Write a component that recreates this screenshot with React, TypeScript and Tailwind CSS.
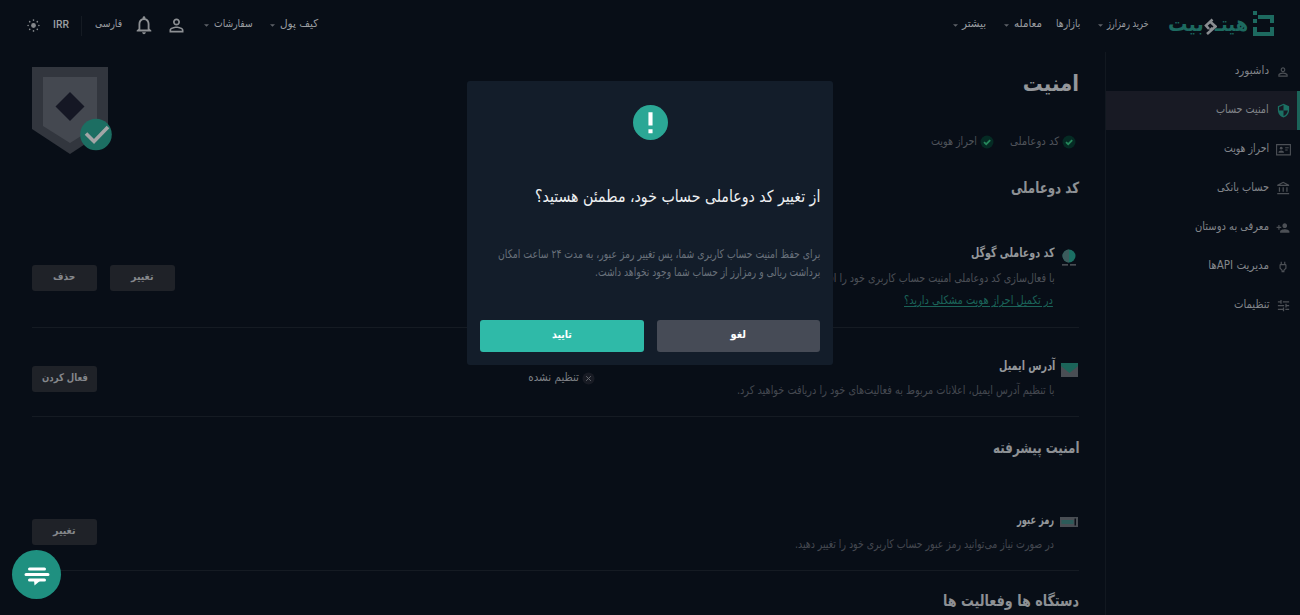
import React, { useLayoutEffect, useRef, useState } from "react";
import {
  MdPersonOutline,
  MdNotificationsNone,
  MdSecurity,
  MdOutlineAccountBalance,
  MdPersonAdd,
  MdOutlinePower,
  MdTune,
} from "react-icons/md";

/** Single line of text, condensed or stretched to an exact width. */
function Fit({ w, className = "", children }: { w: number; className?: string; children: React.ReactNode }) {
  const ref = useRef<HTMLSpanElement>(null);
  const [scale, setScale] = useState(1);
  useLayoutEffect(() => {
    if (ref.current) setScale(w / ref.current.offsetWidth);
  }, [w]);
  return (
    <span className={`block h-5 shrink-0 whitespace-nowrap leading-5 ${className}`} style={{ width: w }}>
      <span ref={ref} className="inline-block origin-right" style={{ transform: `scaleX(${scale})` }}>
        {children}
      </span>
    </span>
  );
}

function Caret({ className = "" }: { className?: string }) {
  return (
    <svg viewBox="0 0 6 3" className={`mt-1 h-[3px] w-[5px] shrink-0 fill-[#5d6167] ${className}`}>
      <path d="M0 0h6L3 3z" />
    </svg>
  );
}

function Logo() {
  return (
    <div className="flex items-center">
      <svg viewBox="0 0 21 25" className="h-[25px] w-[21px] fill-[#1d6a60]">
        <path d="M0 0h4v4H0zM5 4h16v8h-4V8H5zM0 8h4v4H0zM0 16h4v5h13v-5h4v9H0z" />
      </svg>
      <div className="mt-1 mr-[5px] flex items-center font-bold text-[#1d6a60]">
        <Fit w={33} className="h-6 text-[21px]">هیتـ</Fit>
        <svg viewBox="0 0 13 17" className="-mr-0.5 mt-0.5 h-[17px] w-[13px]" fill="none" stroke="#8a8d91" strokeWidth="2.6">
          <path d="M8.500 1.500 2 7.500l3 3.500M6 3.500l5.500 5L3 16M6 12.500l2.500-2.500" />
        </svg>
        <Fit w={36} className="h-6 text-[21px]">بیت</Fit>
      </div>
    </div>
  );
}

function Sun() {
  return (
    <svg viewBox="0 0 14 14" className="mt-1 h-[13px] w-[13px] fill-[#85888c]">
      <circle cx="7" cy="7" r="2.6" />
      <circle cx="7" cy="1.2" r=".9" />
      <circle cx="7" cy="12.8" r=".9" />
      <circle cx="1.2" cy="7" r=".9" />
      <circle cx="12.8" cy="7" r=".9" />
      <circle cx="2.9" cy="2.9" r=".9" />
      <circle cx="11.1" cy="2.9" r=".9" />
      <circle cx="2.9" cy="11.1" r=".9" />
      <circle cx="11.1" cy="11.1" r=".9" />
    </svg>
  );
}

function IdCard() {
  return (
    <svg viewBox="0 0 15 12" className="h-3 w-[15px]" fill="none" stroke="currentColor">
      <path d="M.6.6h13.8v10.3H.6z" strokeWidth="1.1" />
      <circle cx="5.2" cy="4.2" r="1.4" fill="currentColor" stroke="none" />
      <path d="M2.4 8.7c0-3 5.6-3 5.6 0z" fill="currentColor" stroke="none" />
      <path d="M9.2 3.8h3.5M9.2 6h2.5" strokeWidth="1" />
    </svg>
  );
}

const menu = [
  { label: "داشبورد", w: 34, icon: <MdPersonOutline size={14} /> },
  { label: "امنیت حساب", w: 53, icon: <MdSecurity size={15} />, active: true },
  { label: "احراز هویت", w: 45, icon: <IdCard /> },
  { label: "حساب بانکی", w: 52, icon: <MdOutlineAccountBalance size={15} /> },
  { label: "معرفی به دوستان", w: 74, icon: <MdPersonAdd size={14} /> },
  { label: "مدیریت APIها", w: 61, icon: <MdOutlinePower size={14} /> },
  { label: "تنظیمات", w: 36, icon: <MdTune size={15} className="-scale-x-100" /> },
];

function Header() {
  return (
    <header className="flex h-[52px] items-start justify-between pr-[26px] pl-[27px] text-[11px] font-medium text-[#9b9ea2]">
      <nav className="flex h-[47px] items-center">
        <Logo />
        <Fit w={42} className="mr-[19px]">خرید رمزارز</Fit>
        <Caret className="mr-1" />
        <Fit w={24} className="mr-[18px]">بازارها</Fit>
        <Fit w={28} className="mr-3.5">معامله</Fit>
        <Caret className="mr-[5px]" />
        <Fit w={24} className="mr-[18px]">بیشتر</Fit>
        <Caret className="mr-1" />
      </nav>
      <div className="flex h-[47px] items-center">
        <Fit w={38}>کیف پول</Fit>
        <Caret className="mr-[5px]" />
        <Fit w={39} className="mr-[17px]">سفارشات</Fit>
        <Caret className="mr-[5px]" />
        <MdPersonOutline className="mr-[17px] mt-[3px] h-[21px] w-[21px] text-[#8d9094]" />
        <MdNotificationsNone className="mr-[11px] mt-[3px] h-[22px] w-[22px] text-[#8d9094]" />
        <Fit w={27} className="mr-[11px]">فارسی</Fit>
        <span className="mr-[13px] mt-1 h-5 w-px bg-[#151b23]" />
        <span className="mt-0.5 mr-3 w-4 font-['Roboto','Noto_Sans',sans-serif] text-[11px] leading-5">
          <Fit w={16}>IRR</Fit>
        </span>
        <span className="mr-[13px]"><Sun /></span>
      </div>
    </header>
  );
}

function Sidebar() {
  return (
    <aside className="w-[195px] shrink-0 border-l border-[#121820]">
      {menu.map((m) => (
        <div
          key={m.label}
          className={`flex h-[39px] items-center pb-[3px] ${
            m.active ? "border-r-[3px] border-[#1b6459] bg-[#181a24] pr-[6px]" : "pr-[9px]"
          }`}
        >
          <span className={`mt-[3px] flex w-4 justify-center ${m.active ? "text-[#1b7063]" : "text-[#4c5056]"}`}>
            {m.icon}
          </span>
          <Fit w={m.w} className="mr-1.5 text-[11.5px] text-[#82858a]">{m.label}</Fit>
        </div>
      ))}
    </aside>
  );
}

function Verified({ label, w }: { label: string; w: number }) {
  return (
    <div className="flex items-center gap-[3px]">
      <svg viewBox="0 0 14 14" className="mt-0.5 h-[14px] w-[14px]">
        <circle cx="7" cy="7" r="6.5" fill="#052b24" />
        <path d="m4 7.2 2.2 2 4-4" fill="none" stroke="#26875b" strokeWidth="1.8" />
      </svg>
      <Fit w={w} className="text-[11.5px] text-[#4f535a]">{label}</Fit>
    </div>
  );
}

function Btn({ label, w }: { label: string; w: number }) {
  return (
    <button className="flex h-[26px] w-[65px] justify-center rounded-[3px] bg-[#1f2228] pt-px text-[10.5px] font-semibold text-[#85888c]">
      <Fit w={w}>{label}</Fit>
    </button>
  );
}

function Badge() {
  return (
    <svg viewBox="0 0 80 88" className="h-[88px] w-20">
      <path d="M0 0h76v62L38 87 0 62z" fill="#32363e" />
      <path d="M11 10h54v49L38 76 11 59z" fill="#444850" />
      <path d="m38 25 14.5 14.5L38 54 23.500 39.500z" fill="#151724" />
      <circle cx="64" cy="67.500" r="15.800" fill="#1c6e62" />
      <path d="m54 66.500 8 8 14-14.500" fill="none" stroke="#a3a5a6" strokeWidth="3.600" />
    </svg>
  );
}

function Main() {
  return (
    <main className="w-[1105px] pr-[26px] pl-8">
      <div className="flex h-[116px] justify-between">
        <div className="pt-[22px]">
          <Fit w={56} className="h-7 text-[22px] font-bold text-[#94979b]">امنیت</Fit>
          <div className="mt-[29px] flex gap-4 pr-[3px]">
            <Verified label="کد دوعاملی" w={49} />
            <Verified label="احراز هویت" w={46} />
          </div>
        </div>
        <div className="pt-[15px]">
          <div className="w-20"><Badge /></div>
        </div>
      </div>

      <section className="flex h-40 flex-col justify-between border-b border-[#151b23]">
        <Fit w={68} className="mt-[10px] text-[15.5px] font-bold text-[#8d9094]">کد دوعاملی</Fit>
        <div className="flex items-start justify-between pb-[17px]">
          <div className="flex">
            <svg viewBox="0 0 14 18" className="mt-[6px] mr-[3px] ml-[7px] h-[18px] w-[14px]">
              <circle cx="7" cy="7" r="6.500" fill="#1b6f63" />
              <path d="M7 7V13.500A6.500 6.500 0 0 1 .5 7 6.500 6.500 0 0 1 7 .5z" fill="#3c5b5c" />
              <path d="M0 15.800h6M8 15.800h6" stroke="#5d6167" strokeWidth="1.200" />
            </svg>
            <div>
              <Fit w={84} className="text-[13px] font-bold text-[#94979b]">کد دوعاملی گوگل</Fit>
              <Fit w={272} className="mt-[5px] text-[12px] text-[#4b4f56]">
                با فعال‌سازی کد دوعاملی امنیت حساب کاربری خود را افزایش دهید.
              </Fit>
              <Fit w={149} className="mt-0.5 mr-0.5 text-[12px] text-[#1b6459] [&>span]:underline [&>span]:underline-offset-2">
                در تکمیل احراز هویت مشکلی دارید؟
              </Fit>
            </div>
          </div>
          <div className="mt-[22px] flex gap-[13px]">
            <Btn label="تغییر" w={22} />
            <Btn label="حذف" w={22} />
          </div>
        </div>
      </section>

      <section className="flex h-[89px] justify-between border-b border-[#151b23] pt-7">
        <div className="flex">
          <svg viewBox="0 0 17 14" className="mt-[7px] mr-[1px] ml-[6px] h-[14px] w-[17px]">
            <path d="M0 0h17v14H0z" fill="#494e54" />
            <path d="M0 0h17v3L8.500 10 0 3z" fill="#1b6459" />
          </svg>
          <div>
            <Fit w={56} className="text-[13px] font-bold text-[#94979b]">آدرس ایمیل</Fit>
            <Fit w={318} className="mt-1 text-[12px] text-[#444850]">
              با تنظیم آدرس ایمیل، اعلانات مربوط به فعالیت‌های خود را دریافت خواهید کرد.
            </Fit>
          </div>
          <div className="mt-[11px] mr-[142px] flex h-5 items-center gap-[3px]">
            <svg viewBox="0 0 14 14" className="mt-[3px] h-[13px] w-[13px]">
              <circle cx="7" cy="7" r="6.500" fill="#181b24" />
              <path d="m4.500 4.500 5 5m0-5-5 5" stroke="#6c6f75" strokeWidth="1" />
            </svg>
            <Fit w={51} className="text-[11.5px] text-[#7d8085]">تنظیم نشده</Fit>
          </div>
        </div>
        <div className="mt-[10px]">
          <Btn label="فعال کردن" w={46} />
        </div>
      </section>

      <section className="flex h-[154px] flex-col justify-between border-b border-[#151b23] pt-[21px]">
        <Fit w={86} className="text-[15.5px] font-bold text-[#8d9094]">امنیت پیشرفته</Fit>
        <div className="flex justify-between pb-4">
          <div className="flex">
            <svg viewBox="0 0 18 10" className="mt-[7px] mr-px ml-[6px] h-[10px] w-[18px]">
              <path d="M0 0h18v10H0z" fill="#494e54" />
              <path d="M1.500 3h12v4h-12z" fill="#2c5b59" />
              <path d="M14.500 1.500h1.500v7h-1.500z" fill="#0a1018" />
            </svg>
            <div>
              <Fit w={37} className="text-[13px] font-bold text-[#94979b]">رمز عبور</Fit>
              <Fit w={259} className="mt-1 text-[12px] text-[#444850]">
                در صورت نیاز می‌توانید رمز عبور حساب کاربری خود را تغییر دهید.
              </Fit>
            </div>
          </div>
          <div className="mt-[9px]">
            <Btn label="تغییر" w={22} />
          </div>
        </div>
      </section>
      <Fit w={136} className="mt-5 text-[15.5px] font-bold text-[#8d9094]">دستگاه ها وفعالیت ها</Fit>
    </main>
  );
}

function Dialog() {
  return (
    <div role="dialog" className="absolute top-[81px] left-[467px] h-[284px] w-[366px] rounded-[3px] bg-[#131d2a] px-[13px] pt-6">
      <svg viewBox="0 0 34 34" className="mx-auto h-[35px] w-[35px]">
        <circle cx="17" cy="17" r="17" fill="#2ba795" />
        <path d="M15 7h4v13h-4zM15 23.500h4v4h-4z" fill="#fff" />
      </svg>
      <Fit w={285} className="mt-[47px] h-6 text-[16.5px] font-medium text-[#eef0f2]">
        از تغییر کد دوعاملی حساب خود، مطمئن هستید؟
      </Fit>
      <div className="mt-[33px] text-[12px] text-[#69717b]">
        <Fit w={322}>برای حفظ امنیت حساب کاربری شما، پس تغییر رمز عبور، به مدت ۲۴ ساعت امکان</Fit>
        <Fit w={225} className="-mt-0.5">برداشت ریالی و رمزارز از حساب شما وجود نخواهد داشت.</Fit>
      </div>
      <div className="mt-[38px] flex gap-[13px] text-[11px] font-bold text-white">
        <button className="flex h-8 flex-1 justify-center rounded-[3px] bg-[#464b56] pt-[5px]"><Fit w={16}>لغو</Fit></button>
        <button className="flex h-8 flex-1 justify-center rounded-[3px] bg-[#2fbaa8] pt-[5px]"><Fit w={20}>تایید</Fit></button>
      </div>
    </div>
  );
}

export default function App() {
  return (
    <div
      dir="rtl"
      className="relative h-[615px] w-[1300px] overflow-hidden bg-[#080e17] font-['DejaVu_Sans_Condensed','DejaVu_Sans',sans-serif]"
    >
      <Header />
      <div className="flex h-[563px]">
        <Sidebar />
        <Main />
      </div>
      <Dialog />
      <button className="absolute top-[550px] left-3 flex h-[49px] w-[49px] items-center justify-center rounded-full bg-[#1f9080]">
        <svg viewBox="0 0 26 20" className="mt-0.5 h-5 w-[26px]" fill="none" stroke="#fff" strokeWidth="3" strokeLinecap="round">
          <path d="M5.500 3h15M2 8.500h22M5.500 14h15" />
          <path d="M10 14h7l-6.500 5.500z" fill="#fff" stroke="none" />
        </svg>
      </button>
    </div>
  );
}
